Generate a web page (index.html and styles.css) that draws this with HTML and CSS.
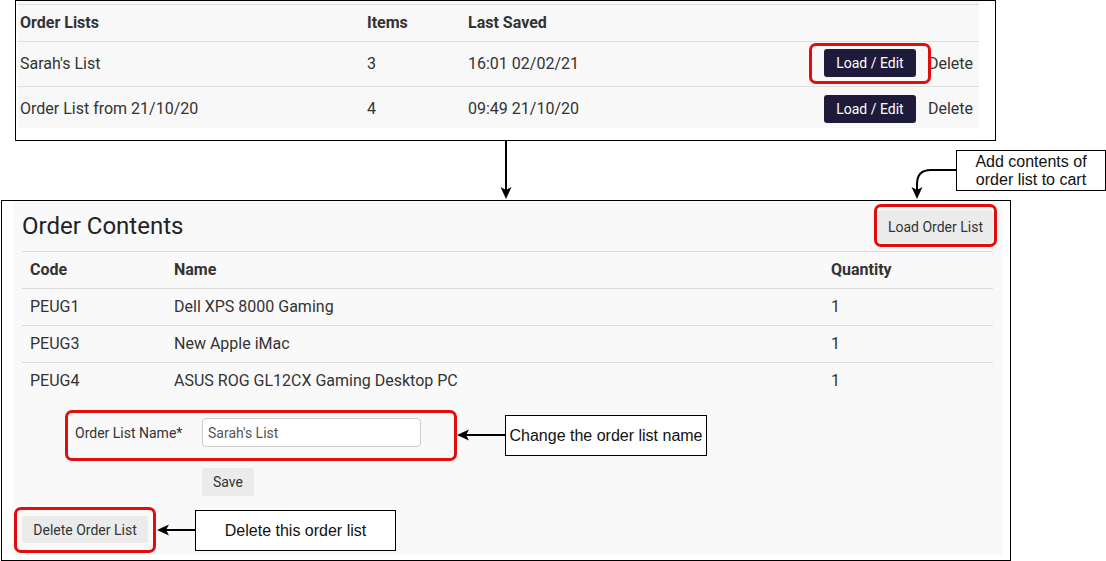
FILE: index.html
```html
<!DOCTYPE html>
<html lang="en">
<head>
    <meta charset="UTF-8">
    <meta name="viewport" content="width=device-width, initial-scale=1.0">
    <title>Order Lists</title>
    <link rel="stylesheet" href="styles.css">
</head>
<body>
    <div class="canvas">
        <!-- saved order lists -->
        <section class="panel panel-lists">
            <div class="lists-table">
                <div class="lists-row lists-head">
                    <div>Order Lists</div>
                    <div>Items</div>
                    <div>Last Saved</div>
                    <div></div>
                </div>
                <div class="lists-row">
                    <div>Sarah's List</div>
                    <div>3</div>
                    <div>16:01 02/02/21</div>
                    <div class="actions">
                        <button class="btn btn-dark">Load / Edit</button>
                        <a class="link">Delete</a>
                    </div>
                </div>
                <div class="lists-row lists-last">
                    <div>Order List from 21/10/20</div>
                    <div>4</div>
                    <div>09:49 21/10/20</div>
                    <div class="actions">
                        <button class="btn btn-dark">Load / Edit</button>
                        <a class="link">Delete</a>
                    </div>
                </div>
            </div>
        </section>

        <!-- contents of the selected list -->
        <section class="panel panel-contents">
            <div class="contents">
                <div class="contents-head">
                    <h2>Order Contents</h2>
                    <button class="btn btn-light btn-lg">Load Order List</button>
                </div>
                <div class="items">
                    <div class="items-row items-head">
                        <div>Code</div>
                        <div>Name</div>
                        <div>Quantity</div>
                    </div>
                    <div class="items-row">
                        <div>PEUG1</div>
                        <div>Dell XPS 8000 Gaming</div>
                        <div>1</div>
                    </div>
                    <div class="items-row">
                        <div>PEUG3</div>
                        <div>New Apple iMac</div>
                        <div>1</div>
                    </div>
                    <div class="items-row">
                        <div>PEUG4</div>
                        <div>ASUS ROG GL12CX Gaming Desktop PC</div>
                        <div>1</div>
                    </div>
                </div>
                <div class="form-row">
                    <label for="listName">Order List Name*</label>
                    <input id="listName" type="text" value="Sarah's List">
                </div>
                <div class="save-row">
                    <button class="btn btn-light btn-save">Save</button>
                </div>
                <button class="btn btn-light btn-delete">Delete Order List</button>
            </div>
        </section>

        <!-- annotations -->
        <div class="highlight hl-load-edit"></div>
        <div class="highlight hl-load-list"></div>
        <div class="highlight hl-name"></div>
        <div class="highlight hl-delete"></div>

        <div class="callout callout-cart">Add contents of<br>order list to cart</div>
        <div class="callout callout-name">Change the order list name</div>
        <div class="callout callout-delete">Delete this order list</div>

        <svg class="arrows" width="1106" height="561" viewBox="0 0 1106 561">
            <g stroke="#000" stroke-width="2" fill="none">
                <path d="M506 141 V190"/>
                <path d="M956 170 H931 Q917 170 917 184 V190"/>
                <path d="M505 435 H466"/>
                <path d="M195 530 H166"/>
            </g>
            <g fill="#000">
                <polygon points="506,199 500.5,187 506,190 511.5,187"/>
                <polygon points="917,199 911.5,187 917,190 922.5,187"/>
                <polygon points="457,435 469,429.5 466,435 469,440.5"/>
                <polygon points="157,530 169,524.5 166,530 169,535.5"/>
            </g>
        </svg>
    </div>
</body>
</html>
```

FILE: styles.css
```css
* {
    box-sizing: border-box;
}
body {
    margin: 0;
    background: #fff;
    font-family: Roboto, "Liberation Sans", Arial, sans-serif;
    color: #333;
}
.canvas {
    position: relative;
    width: 1106px;
    height: 561px;
    overflow: hidden;
}
.panel {
    position: absolute;
    border: 1px solid #000;
    background: #fff;
}

/* top panel */
.panel-lists {
    left: 15px;
    top: 0;
    width: 981px;
    height: 141px;
}
.lists-table {
    margin-left: 2px;
    width: 961px;
    padding-top: 3px;
    background: #f8f8f8;
    font-size: 16px;
}
.lists-row {
    display: grid;
    grid-template-columns: 347px 101px 1fr auto;
    align-items: center;
    height: 45px;
    padding: 0 6px 2px 2px;
    border-top: 1px solid #ddd;
}
.lists-head {
    height: 37px;
    font-weight: 700;
}
.lists-last {
    height: 42px;
    padding-top: 2px;
    padding-bottom: 0;
}
.actions {
    display: flex;
    align-items: center;
    gap: 12px;
}
.link {
    color: #333;
    cursor: pointer;
}

/* buttons */
.btn {
    font-family: Roboto, "Liberation Sans", Arial, sans-serif;
    font-size: 14px;
    border: none;
    border-radius: 3px;
    padding: 0 11px;
    white-space: nowrap;
    cursor: pointer;
}
.btn-dark {
    width: 92px;
    height: 28px;
    background: #1e1b3a;
    color: #fff;
}
.btn-light {
    background: #ebebeb;
    color: #333;
}
.btn-lg {
    width: 115px;
    height: 33px;
    padding: 0;
    font-size: 14px;
}
.btn-save {
    width: 52px;
    height: 28px;
    padding: 0;
}
.btn-delete {
    width: 126px;
    height: 27px;
    padding: 0;
    margin-top: 20px;
}

/* lower panel */
.panel-contents {
    left: 1px;
    top: 200px;
    width: 1010px;
    height: 361px;
}
.contents {
    margin: 0 8px 0 11px;
    height: 354px;
    padding: 0 9px;
    background: #f9f9f9;
}
.contents-head {
    display: flex;
    justify-content: space-between;
    align-items: center;
    padding: 9px 0 8px;
}
.contents-head h2 {
    margin: 0;
    font-size: 24px;
    font-weight: 400;
    color: #222;
    line-height: 1.2;
}
.items {
    font-size: 16px;
}
.items-row {
    display: grid;
    grid-template-columns: 144px 657px 1fr;
    align-items: center;
    height: 37px;
    padding: 0 0 2px 8px;
    border-top: 1px solid #ddd;
}
.items-head {
    font-weight: 700;
}
.form-row {
    display: flex;
    align-items: center;
    margin-top: 19px;
    padding-left: 53px;
    font-size: 14px;
}
.form-row label {
    width: 127px;
}
.form-row input {
    width: 219px;
    height: 29px;
    padding: 0 5px;
    border: 1px solid #ccc;
    border-radius: 4px;
    background: #fff;
    font-family: Roboto, "Liberation Sans", Arial, sans-serif;
    font-size: 14px;
    color: #555;
}
.save-row {
    margin-top: 21px;
    padding-left: 180px;
}

/* annotations */
.highlight {
    position: absolute;
    border: 3px solid #e10d0d;
    border-radius: 7px;
}
.hl-load-edit {
    left: 809px;
    top: 43px;
    width: 122px;
    height: 41px;
}
.hl-load-list {
    left: 874px;
    top: 204px;
    width: 123px;
    height: 43px;
}
.hl-name {
    left: 65px;
    top: 410px;
    width: 392px;
    height: 51px;
}
.hl-delete {
    left: 14px;
    top: 507px;
    width: 142px;
    height: 46px;
}
.callout {
    position: absolute;
    display: flex;
    align-items: center;
    justify-content: center;
    border: 1px solid #000;
    background: #fff;
    font-family: "Liberation Sans", Arial, sans-serif;
    font-size: 16px;
    line-height: 18px;
    color: #111;
    text-align: center;
    white-space: nowrap;
}
.callout-cart {
    left: 956px;
    top: 150px;
    width: 150px;
    height: 41px;
}
.callout-name {
    left: 505px;
    top: 415px;
    width: 202px;
    height: 41px;
}
.callout-delete {
    left: 195px;
    top: 510px;
    width: 201px;
    height: 41px;
}
.arrows {
    position: absolute;
    left: 0;
    top: 0;
    pointer-events: none;
}
```
